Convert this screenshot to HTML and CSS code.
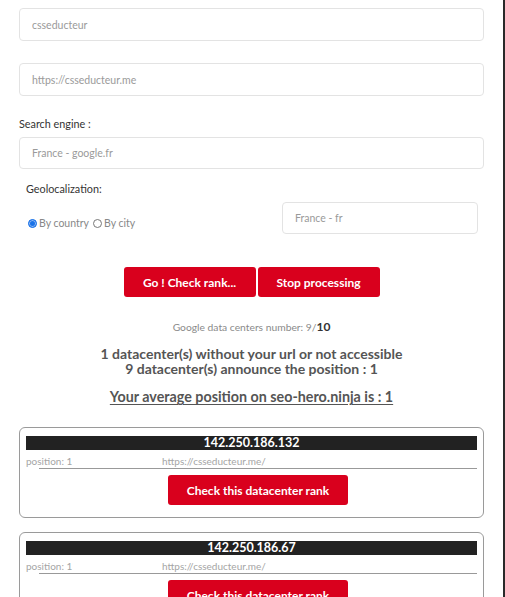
FILE: index.html
```html
<!DOCTYPE html>
<html lang="en">
<head>
<meta charset="utf-8">
<title>Check rank</title>
<link rel="stylesheet" href="styles.css">
</head>
<body>
<div class="page">
  <input class="field" type="text" placeholder="csseducteur">
  <input class="field field-gap" type="text" placeholder="https://csseducteur.me">

  <label class="label">Search engine :</label>
  <input class="field field-engine" type="text" placeholder="France - google.fr">

  <div class="geo">
    <div class="label">Geolocalization:</div>
    <div class="geo-row">
      <div class="radios">
        <label class="radio"><input type="radio" name="geo" checked>By country</label>
        <label class="radio"><input type="radio" name="geo">By city</label>
      </div>
      <input class="field field-geo" type="text" placeholder="France - fr">
    </div>
  </div>

  <div class="actions">
    <button class="btn">Go ! Check rank...</button>
    <button class="btn">Stop processing</button>
  </div>

  <p class="count">Google data centers number: 9/<b>10</b></p>

  <div class="summary">
    <div>1 datacenter(s) without your url or not accessible</div>
    <div>9 datacenter(s) announce the position : 1</div>
  </div>

  <p class="average">Your average position on seo-hero.ninja is : 1</p>

  <div class="card">
    <div class="ip">142.250.186.132</div>
    <div class="result">
      <span>position: 1</span>
      <span>https://csseducteur.me/</span>
    </div>
    <div class="rule"></div>
    <div class="card-action"><button class="btn btn-wide">Check this datacenter rank</button></div>
  </div>

  <div class="card">
    <div class="ip">142.250.186.67</div>
    <div class="result">
      <span>position: 1</span>
      <span>https://csseducteur.me/</span>
    </div>
    <div class="rule"></div>
    <div class="card-action"><button class="btn btn-wide">Check this datacenter rank</button></div>
  </div>
</div>
</body>
</html>
```

FILE: styles.css
```css
html {
  height: 100%;
  overflow: hidden;
}
body {
  margin: 0;
  height: 100%;
  font-family: "Lato", "Liberation Sans", sans-serif;
  color: #333;
  background: #fff;
  border-right: 2px solid #2a2a2a;
  box-sizing: border-box;
  overflow: hidden;
}
.page {
  padding: 8px 19px 0 19px;
  display: flex;
  flex-direction: column;
}
.field {
  display: block;
  box-sizing: border-box;
  width: 100%;
  height: 33px;
  margin: 0;
  padding: 0 12px;
  border: 1px solid #e3e3e3;
  border-radius: 4px;
  font-family: "Lato", sans-serif;
  font-size: 10.5px;
  color: #555;
  background: #fff;
  outline: none;
}
.field::placeholder {
  color: #9a9a9a;
}
.field-gap {
  margin-top: 22px;
}
.label {
  display: block;
  font-size: 10.8px;
  line-height: 16px;
  color: #333;
  margin-top: 20px;
}
.field-engine {
  margin-top: 5px;
  height: 32px;
}
.geo {
  padding: 0 6px 0 7px;
}
.geo .label {
  margin-top: 12px;
}
.geo-row {
  display: flex;
  justify-content: space-between;
  align-items: flex-start;
  margin-top: 5px;
}
.radios {
  display: flex;
  gap: 4px;
  padding-top: 13px;
  padding-left: 2px;
}
.radio {
  display: flex;
  align-items: center;
  gap: 2px;
  font-size: 10.5px;
  line-height: 16px;
  color: #888;
}
.radio input {
  appearance: none;
  -webkit-appearance: none;
  width: 9px;
  height: 9px;
  margin: 0;
  border: 1px solid #777;
  border-radius: 50%;
  background: #fff;
  box-sizing: border-box;
}
.radio input:checked {
  border-color: #1a73e8;
  background: #1a73e8;
  box-shadow: inset 0 0 0 1px #8fb8f3;
}
.field-geo {
  width: 196px;
  height: 32px;
  flex: none;
}
.actions {
  display: flex;
  justify-content: center;
  gap: 2px;
  margin-top: 33px;
}
.btn {
  height: 30px;
  padding: 0 18px;
  border: none;
  border-radius: 3px;
  background: #d9001d;
  color: #fff;
  font-family: "Lato", sans-serif;
  font-weight: 700;
  font-size: 12px;
  cursor: pointer;
}
.actions .btn:first-child {
  width: 132px;
}
.actions .btn:last-child {
  width: 122px;
}
.count {
  margin: 22px 0 0;
  text-align: center;
  font-size: 10.3px;
  line-height: 16px;
  color: #8a8a8a;
}
.count b {
  color: #333;
  font-size: 12px;
}
.summary {
  margin: 11px 0 0;
  text-align: center;
  font-weight: 700;
  font-size: 14px;
  line-height: 15px;
  color: #555;
}
.average {
  margin: 13px 0 0;
  text-align: center;
  font-weight: 700;
  font-size: 14.3px;
  line-height: 16px;
  color: #555;
  text-decoration: underline;
  text-underline-offset: 2px;
}
.card {
  margin-top: 22px;
  border: 1px solid #9a9a9a;
  border-radius: 6px;
  padding: 8px 6px 12px;
}
.card + .card {
  margin-top: 14px;
}
.ip {
  background: #222;
  color: #fff;
  text-align: center;
  font-weight: 700;
  font-size: 12.5px;
  line-height: 14px;
}
.result {
  display: grid;
  grid-template-columns: 136px 1fr;
  margin-top: 5px;
  font-size: 10px;
  line-height: 13px;
  color: #a5a5a5;
}
.rule {
  margin-left: 13px;
  border-bottom: 1px solid #999;
}
.card-action {
  display: flex;
  justify-content: center;
  margin-top: 6px;
  padding-left: 13px;
}
.btn-wide {
  width: 180px;
  padding: 0;
}
```
